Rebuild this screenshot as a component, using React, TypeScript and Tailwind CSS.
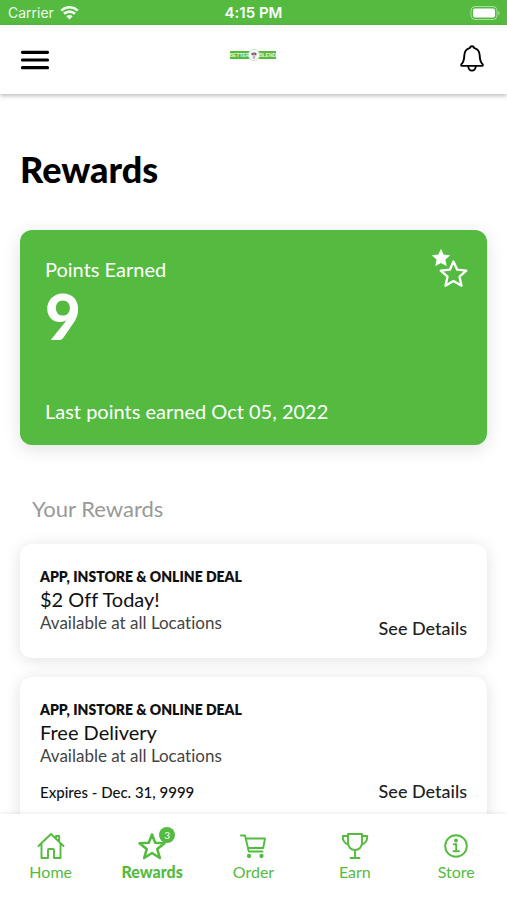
import type { ReactNode } from "react";

type Deal = { title: string; expires?: string };

const deals: Deal[] = [
  { title: "$2 Off Today!" },
  { title: "Free Delivery", expires: "Expires - Dec. 31, 9999" },
];

function StatusBar() {
  return (
    <div className="grid h-[25px] shrink-0 grid-cols-3 items-center bg-[#54bb40] px-2 font-['Inter',sans-serif] text-sm text-white">
      <div className="flex items-center gap-1.5 opacity-90">
        <span>Carrier</span>
        <svg width="19" height="14" viewBox="0 0 19 14" fill="none" aria-hidden="true">
          <path d="M1.2 4.6a12 12 0 0 1 16.6 0M4 7.8a8 8 0 0 1 11 0" stroke="currentColor" strokeWidth="2.6" />
          <path d="M9.5 13.6 6.3 10.3a4.6 4.6 0 0 1 6.4 0z" fill="currentColor" />
        </svg>
      </div>
      <span className="text-center text-[15px] font-semibold">4:15 PM</span>
      <svg className="-mr-1 justify-self-end" width="33" height="14" viewBox="0 0 33 14" aria-hidden="true">
        <rect x="1" y="0.5" width="26" height="13" rx="4" fill="none" stroke="#fff" strokeOpacity=".5" />
        <rect x="3" y="2.5" width="22" height="9" rx="2" fill="#fff" />
        <path d="M28.5 4.5q2.2 2.5 0 5z" fill="#fff" fillOpacity=".6" />
      </svg>
    </div>
  );
}

function Logo() {
  return (
    <svg
      width="46"
      height="14"
      viewBox="0 0 46 14"
      role="img"
      aria-label="Better Blend"
      fontFamily="'Liberation Sans Narrow', 'Liberation Sans', sans-serif"
      fontSize="5"
      fontWeight="700"
    >
      <rect y="3" width="46" height="8" rx="0.5" fill="#54bb40" />
      <text x="9.5" y="8.8" textAnchor="middle" fill="#e4f6e0">BETTER</text>
      <text x="37.5" y="8.8" textAnchor="middle" fill="#e4f6e0">BLEND</text>
      <circle cx="24" cy="7" r="5.6" fill="#fff" stroke="#b7dfae" strokeWidth="0.8" />
      <path d="M21 5.5q3-3 6 0l-.5 2h-5z" fill="#a79da5" />
      <path d="M22.5 8h3l-.5 3h-2z" fill="#c3b3c8" />
      <circle cx="22.8" cy="6" r="0.7" fill="#2b2348" />
      <circle cx="25.3" cy="6" r="0.7" fill="#2b2348" />
    </svg>
  );
}

function Header() {
  return (
    <header className="z-10 grid h-[69px] shrink-0 grid-cols-3 items-center bg-white px-5 shadow-[0_2px_4px_rgba(0,0,0,0.25)]">
      <button type="button" aria-label="Menu" className="justify-self-start">
        <svg width="30" height="20" viewBox="0 0 30 20" stroke="#000" strokeWidth="3.2" strokeLinecap="round">
          <path d="M2.5 2.3h25M2.5 10h25M2.5 17.7h25" />
        </svg>
      </button>
      <div className="flex justify-center pb-2.5">
        <Logo />
      </div>
      <button type="button" aria-label="Notifications" className="justify-self-end pb-0.5 pr-0.5">
        <svg width="26" height="28" viewBox="0 0 26 28" fill="none" stroke="#000" strokeWidth="1.9" strokeLinejoin="round" strokeLinecap="round">
          <path d="M13 1.3c1.2 0 1.9.7 2 1.6 3.6 1 5.6 4 5.7 7.6.1 4.600.8 6.500 2.600 8.400.8.900.8 2-.2 2H2.900c-1 0-1-1.100-.2-2 1.800-1.900 2.500-3.800 2.600-8.400.1-3.600 2.100-6.600 5.700-7.600.1-.9.800-1.600 2-1.600z" />
          <path d="M9.2 21c.2 2.9 1.7 4.6 3.8 4.6s3.600-1.700 3.800-4.600" />
        </svg>
      </button>
    </header>
  );
}

function PointsCard() {
  return (
    <section className="mt-[41px] flex h-[215px] flex-col rounded-xl bg-[#54bb40] px-[25px] pt-[19px] pb-[22px] text-white shadow-[0_4px_18px_rgba(0,0,0,0.12)]">
      <div className="flex items-start justify-between">
        <div>
          <h2 className="pt-2 text-[20px] leading-6">Points Earned</h2>
          <p className="text-[62px] leading-[70px] font-black">9</p>
        </div>
        <svg className="-mr-1.5" width="36" height="39" viewBox="0 0 36 39" aria-hidden="true">
          <path d="M9 .5l2.5 5.400 6.100.7-4.500 4 1.200 6L9 13.700l-5.300 2.900 1.200-6-4.500-4 6.100-.7z" fill="#fff" stroke="#fff" strokeWidth="0.6" strokeLinejoin="round" />
          <path d="M21.5 12.500l3.700 8.200 9.100 1-6.800 6 2 9-8-4.600-8 4.600 2-9-6.800-6 9.100-1z" fill="#54bb40" stroke="#fff" strokeWidth="2.3" strokeLinejoin="round" />
        </svg>
      </div>
      <p className="mt-auto text-[20px] leading-6">Last points earned Oct 05, 2022</p>
    </section>
  );
}

function DealCard({ title, expires }: Deal) {
  return (
    <li
      className={
        "flex items-end justify-between rounded-xl bg-white px-5 pt-[23px] shadow-[0_2px_16px_rgba(0,0,0,0.12)] " +
        (expires ? "pb-8" : "pb-[18px]")
      }
    >
      <div className={expires ? "pb-px" : "pb-[5px]"}>
        <p className="text-[14px] leading-5 font-extrabold">APP, INSTORE &amp; ONLINE DEAL</p>
        <h3 className="text-[20px] leading-6">{title}</h3>
        <p className="text-[17px] leading-6 text-[#444]">Available at all Locations</p>
        {expires && <p className="mt-3.5 text-[15px] leading-5 font-medium">{expires}</p>}
      </div>
      <button type="button" className="text-[18px] leading-6 font-medium text-[#222]">
        See Details
      </button>
    </li>
  );
}

function NavIcon({ children, bold }: { children: ReactNode; bold?: boolean }) {
  return (
    <svg width="30" height="30" viewBox="0 0 30 30" fill="none" stroke="currentColor" strokeWidth={bold ? 2.6 : 1.9} strokeLinecap="round" strokeLinejoin="round" aria-hidden="true">
      {children}
    </svg>
  );
}

const tabs: { label: string; badge?: number; icon: ReactNode }[] = [
  {
    label: "Home",
    icon: <path d="M2.5 15 15 3l12.5 12M20 7.5V5h3.200v6M5.500 13v14H12v-8q0-1 1-1h4q1 0 1 1v8h6.500V13" />,
  },
  {
    label: "Rewards",
    badge: 3,
    icon: <path d="M15 3.5l3.200 8.200 9.300.6-7.200 5.800 2.500 8.900L15 22l-7.800 5 2.500-8.900-7.200-5.800 9.300-.6z" />,
  },
  {
    label: "Order",
    icon: (
      <>
        <path d="M3 4.5h4l3.800 16h13.700M8 7.500h19l-1.800 9.500H10.200" />
        <circle cx="11" cy="25" r="1.2" fill="currentColor" />
        <circle cx="23.5" cy="25" r="1.2" fill="currentColor" />
      </>
    ),
  },
  {
    label: "Earn",
    icon: <path d="M8 3h14v9c0 4-3 7-7 7s-7-3-7-7zM8 5H2.700c0 5 1.800 7.500 5.800 8.500M22 5h5.300c0 5-1.800 7.500-5.800 8.500M15 19v8M10.500 27h9" />,
  },
  {
    label: "Store",
    icon: (
      <>
        <circle cx="15" cy="15" r="10.8" />
        <path d="M12.8 13.200h2.400v7M12.500 20.200h5.500" />
        <circle cx="15" cy="9.5" r="1" fill="currentColor" />
      </>
    ),
  },
];

function TabBar() {
  return (
    <nav className="z-10 grid h-[86px] shrink-0 grid-cols-5 bg-white pt-[17px] text-[#54bb40] shadow-[0_-1px_4px_rgba(0,0,0,0.08)]">
      {tabs.map(({ label, badge, icon }) => (
        <a
          key={label}
          href={"#" + label.toLowerCase()}
          aria-current={badge ? "page" : undefined}
          className={badge ? "flex flex-col items-center font-black" : "flex flex-col items-center"}
        >
          <span className="relative">
            <NavIcon bold={!!badge}>{icon}</NavIcon>
            {badge && (
              <span className="absolute -top-1 -right-2 flex size-4 items-center justify-center rounded-full bg-[#54bb40] text-[10px] font-normal text-white">
                {badge}
              </span>
            )}
          </span>
          <span className="mt-px text-[16px] leading-5">{label}</span>
        </a>
      ))}
    </nav>
  );
}

export default function App() {
  return (
    <div className="flex h-screen flex-col overflow-hidden bg-white font-['Lato',sans-serif] text-[#111] [font-variant-ligatures:none]">
      <StatusBar />
      <Header />
      <main className="min-h-0 flex-1 overflow-y-auto px-5 pt-[55px] pb-5 [scrollbar-width:none]">
        <h1 className="text-[36px] leading-10 font-black text-black">Rewards</h1>
        <PointsCard />
        <h2 className="mt-[50px] px-3 text-[22px] leading-7 text-[#999]">Your Rewards</h2>
        <ul className="mt-[21px] flex flex-col gap-[19px]">
          {deals.map((deal) => (
            <DealCard key={deal.title} {...deal} />
          ))}
        </ul>
      </main>
      <TabBar />
    </div>
  );
}
